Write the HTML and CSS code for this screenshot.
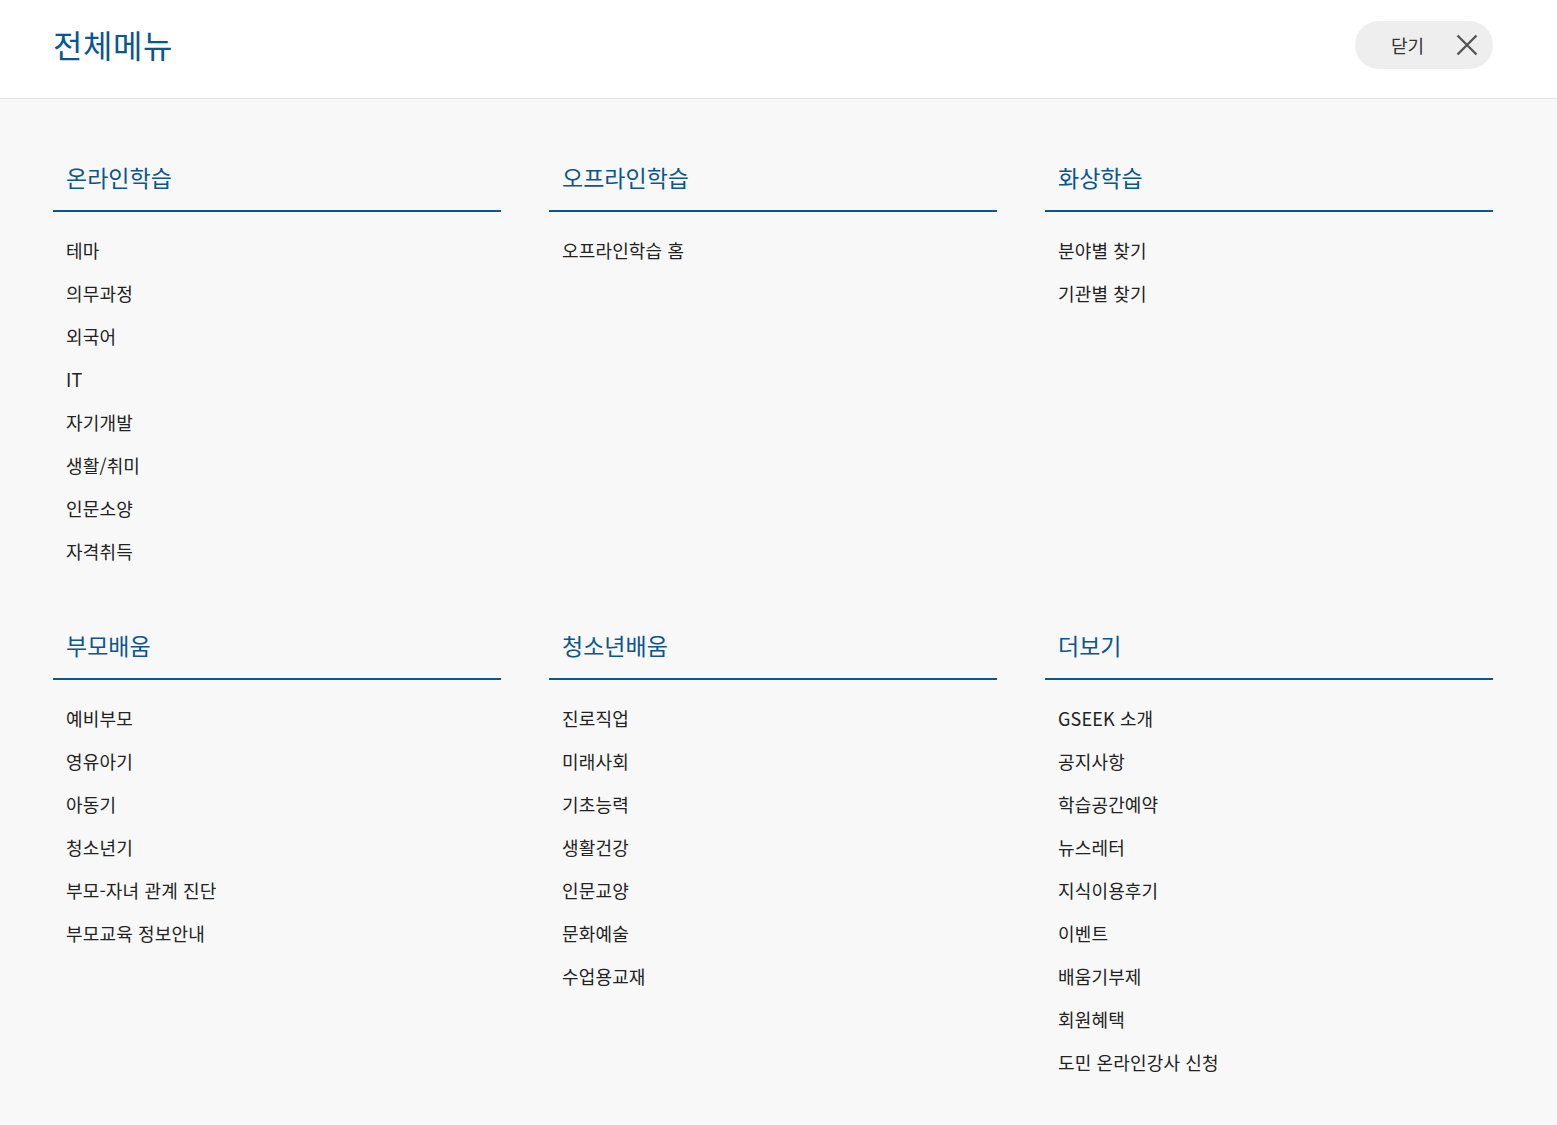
FILE: index.html
```html
<!DOCTYPE html>
<html lang="ko">
<head>
<meta charset="utf-8">
<title>전체메뉴</title>
<link rel="stylesheet" href="styles.css">
</head>
<body>
<header class="top">
  <h1 class="title">전체메뉴</h1>
  <button class="close" type="button"><span>닫기</span>
    <svg class="x" width="22" height="22" viewBox="0 0 22 22" aria-hidden="true"><path d="M1.5 1.5 L20.5 20.5 M20.5 1.5 L1.5 20.5" stroke="#555" stroke-width="2.4" fill="none"/></svg>
  </button>
</header>
<main class="menu">
  <section class="group">
    <h2>온라인학습</h2>
    <ul>
      <li>테마</li><li>의무과정</li><li>외국어</li><li>IT</li><li>자기개발</li><li>생활/취미</li><li>인문소양</li><li>자격취득</li>
    </ul>
  </section>
  <section class="group">
    <h2>오프라인학습</h2>
    <ul><li>오프라인학습 홈</li></ul>
  </section>
  <section class="group">
    <h2>화상학습</h2>
    <ul><li>분야별 찾기</li><li>기관별 찾기</li></ul>
  </section>
  <section class="group">
    <h2>부모배움</h2>
    <ul>
      <li>예비부모</li><li>영유아기</li><li>아동기</li><li>청소년기</li><li>부모-자녀 관계 진단</li><li>부모교육 정보안내</li>
    </ul>
  </section>
  <section class="group">
    <h2>청소년배움</h2>
    <ul>
      <li>진로직업</li><li>미래사회</li><li>기초능력</li><li>생활건강</li><li>인문교양</li><li>문화예술</li><li>수업용교재</li>
    </ul>
  </section>
  <section class="group">
    <h2>더보기</h2>
    <ul>
      <li>GSEEK 소개</li><li>공지사항</li><li>학습공간예약</li><li>뉴스레터</li><li>지식이용후기</li><li>이벤트</li><li>배움기부제</li><li>회원혜택</li><li>도민 온라인강사 신청</li>
    </ul>
  </section>
</main>
</body>
</html>
```
FILE: styles.css
```css
* { box-sizing: border-box; }
html, body { margin: 0; padding: 0; }
body {
  font-family: "Noto Sans CJK KR", "Noto Sans", sans-serif;
  background: #f8f8f8;
  color: #222;
  min-height: 1125px;
}
.top {
  height: 99px;
  background: #fff;
  border-bottom: 1px solid #e6e6e6;
  display: flex;
  align-items: center;
  justify-content: space-between;
  padding: 0 64px 8px 53px;
}
.title {
  margin: 0 0 2px;
  font-size: 32px;
  font-weight: 400;
  color: #0b5590;
  letter-spacing: 0.6px;
  line-height: 1;
}
.close {
  display: flex;
  align-items: center;
  gap: 32px;
  height: 48px;
  width: 138px;
  padding: 0 0 0 36px;
  border: 0;
  border-radius: 24px;
  background: #eeeeee;
  font-family: inherit;
  font-size: 18px;
  color: #333;
  cursor: pointer;
}
.close span { line-height: 1; }
.x { display: block; }
.menu {
  display: grid;
  grid-template-columns: repeat(3, 448px);
  column-gap: 48px;
  row-gap: 54px;
  padding: 60px 0 40px 53px;
}
.group h2 {
  margin: 0;
  padding: 0 13px 15px;
  font-size: 23px;
  font-weight: 400;
  line-height: 36px;
  color: #0b5590;
  border-bottom: 2px solid #0b5590;
}
.group ul {
  list-style: none;
  margin: 0;
  padding: 17px 13px 0;
}
.group li {
  font-size: 18px;
  line-height: 43px;
  color: #222;
  letter-spacing: 0.15px;
}
```
